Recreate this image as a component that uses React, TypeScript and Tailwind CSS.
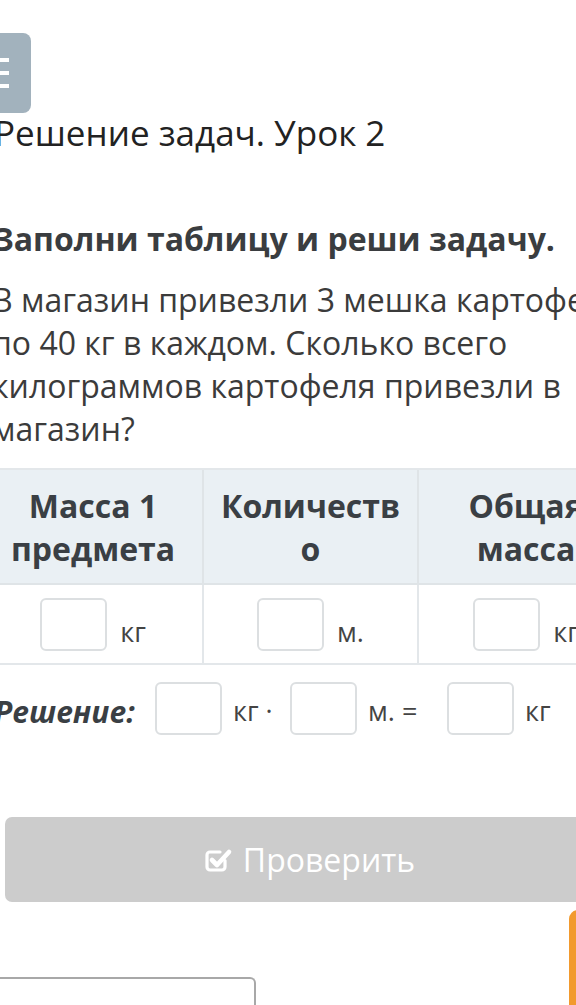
import React from "react";

function Box() {
  return <div className="w-[67px] h-[53px] rounded-[6px] border-2 border-[#dcdfe1] bg-white shrink-0" />;
}

function CheckSquare() {
  return (
    <svg width="30" height="30" viewBox="0 0 30 30" fill="none">
      <path d="M22 15.5 V22 a3 3 0 0 1 -3 3 H7 a3 3 0 0 1 -3 -3 V10 a3 3 0 0 1 3 -3 H17" stroke="white" strokeWidth="3.2" strokeLinecap="round" />
      <path d="M9 15 L14 20 L26 7" stroke="white" strokeWidth="4.6" strokeLinecap="round" strokeLinejoin="round" />
    </svg>
  );
}

export default function App() {
  return (
    <div
      className="relative w-[576px] h-[1005px] overflow-hidden bg-white text-[#333]"
      style={{ fontFamily: '"Open Sans", "Noto Sans", sans-serif' }}
    >
      <div className="ml-[-16px] w-[700px]">
        {/* menu button */}
        <div className="mt-[33px] ml-[-20px] w-[67px] h-[80px] rounded-[8px] bg-[#a2b2bd] flex flex-col justify-center items-end pr-[22px] gap-[9px]">
          <div className="w-[20px] h-[4px] bg-white" />
          <div className="w-[20px] h-[4px] bg-white" />
          <div className="w-[20px] h-[4px] bg-white" />
        </div>

        <h1 className="pl-[10px] text-[35px] leading-[40px] font-normal text-[#222] whitespace-nowrap">Решение задач. Урок 2</h1>

        <h2 className="mt-[66px] pl-[9px] text-[32px] leading-[40px] font-bold text-[#3a3d40] whitespace-nowrap">
          Заполни таблицу и реши задачу.
        </h2>

        <div className="mt-[19px] pl-[8px] text-[32px] leading-[43px] text-[#3b3b3b]">
          <div className="whitespace-nowrap">В магазин привезли 3 мешка картофеля</div>
          <div className="whitespace-nowrap">по 40 кг в каждом. Сколько всего</div>
          <div className="whitespace-nowrap">килограммов картофеля привезли в</div>
          <div className="whitespace-nowrap">магазин?</div>
        </div>

        {/* table */}
        <div className="mt-[18px] border-t-2 border-b-2 border-[#e3e7ea]">
          <div className="grid grid-cols-[218px_215px_216px] bg-[#eaf0f4] border-b-2 border-[#dfe4e7]">
            <div className="h-[113px] flex items-center justify-center text-center text-[32px] leading-[43px] font-bold text-[#3a3f44] whitespace-nowrap">
              Масса 1<br />предмета
            </div>
            <div className="h-[113px] flex items-center justify-center text-center text-[32px] leading-[43px] font-bold text-[#3a3f44] border-l-2 border-[#dfe4e7] whitespace-nowrap">
              Количеств<br />о
            </div>
            <div className="h-[113px] flex items-center justify-center text-center text-[32px] leading-[43px] font-bold text-[#3a3f44] border-l-2 border-[#dfe4e7] whitespace-nowrap">
              Общая<br />масса
            </div>
          </div>
          <div className="grid grid-cols-[218px_215px_216px]">
            <div className="h-[78px] flex items-center justify-center gap-[13px]">
              <Box />
              <span className="self-end mb-[14px] text-[27px] leading-[34px] text-[#444]">кг</span>
            </div>
            <div className="h-[78px] flex items-center justify-center gap-[13px] border-l-2 border-[#e3e7ea]">
              <Box />
              <span className="self-end mb-[14px] text-[27px] leading-[34px] text-[#444]">м.</span>
            </div>
            <div className="h-[78px] flex items-center justify-center gap-[13px] border-l-2 border-[#e3e7ea]">
              <Box />
              <span className="self-end mb-[14px] text-[27px] leading-[34px] text-[#444]">кг</span>
            </div>
          </div>
        </div>

        {/* solution */}
        <div className="mt-[17px] flex items-end h-[53px]">
          <span className="pl-[10px] w-[171px] mb-[5px] text-[30px] leading-[36px] font-bold italic text-[#3a3f44] whitespace-nowrap">Решение:</span>
          <Box />
          <span className="ml-[11px] w-[57px] mb-[7px] text-[27px] leading-[34px] text-[#444] whitespace-nowrap">кг ·</span>
          <Box />
          <span className="ml-[11px] w-[79px] mb-[7px] text-[27px] leading-[34px] text-[#444] whitespace-nowrap">м. =</span>
          <Box />
          <span className="ml-[11px] mb-[7px] text-[27px] leading-[34px] text-[#444]">кг</span>
        </div>

        {/* button */}
        <div className="mt-[82px] ml-[21px] w-[608px] h-[85px] rounded-[7px] bg-[#cccccc] flex items-center justify-center gap-[10px]">
          <CheckSquare />
          <span className="text-[32px] leading-[40px] text-white">Проверить</span>
        </div>

        <div className="flex justify-between w-[660px]">
          <div className="mt-[75px] ml-[-10px] w-[282px] h-[40px] rounded-tr-[6px] border-t-2 border-r-2 border-[#a8a8a8]" />
          <div className="mt-[8px] mr-[-2px] w-[77px] h-[120px] rounded-tl-[9px] bg-[#f29a2e]" />
        </div>
      </div>
    </div>
  );
}
